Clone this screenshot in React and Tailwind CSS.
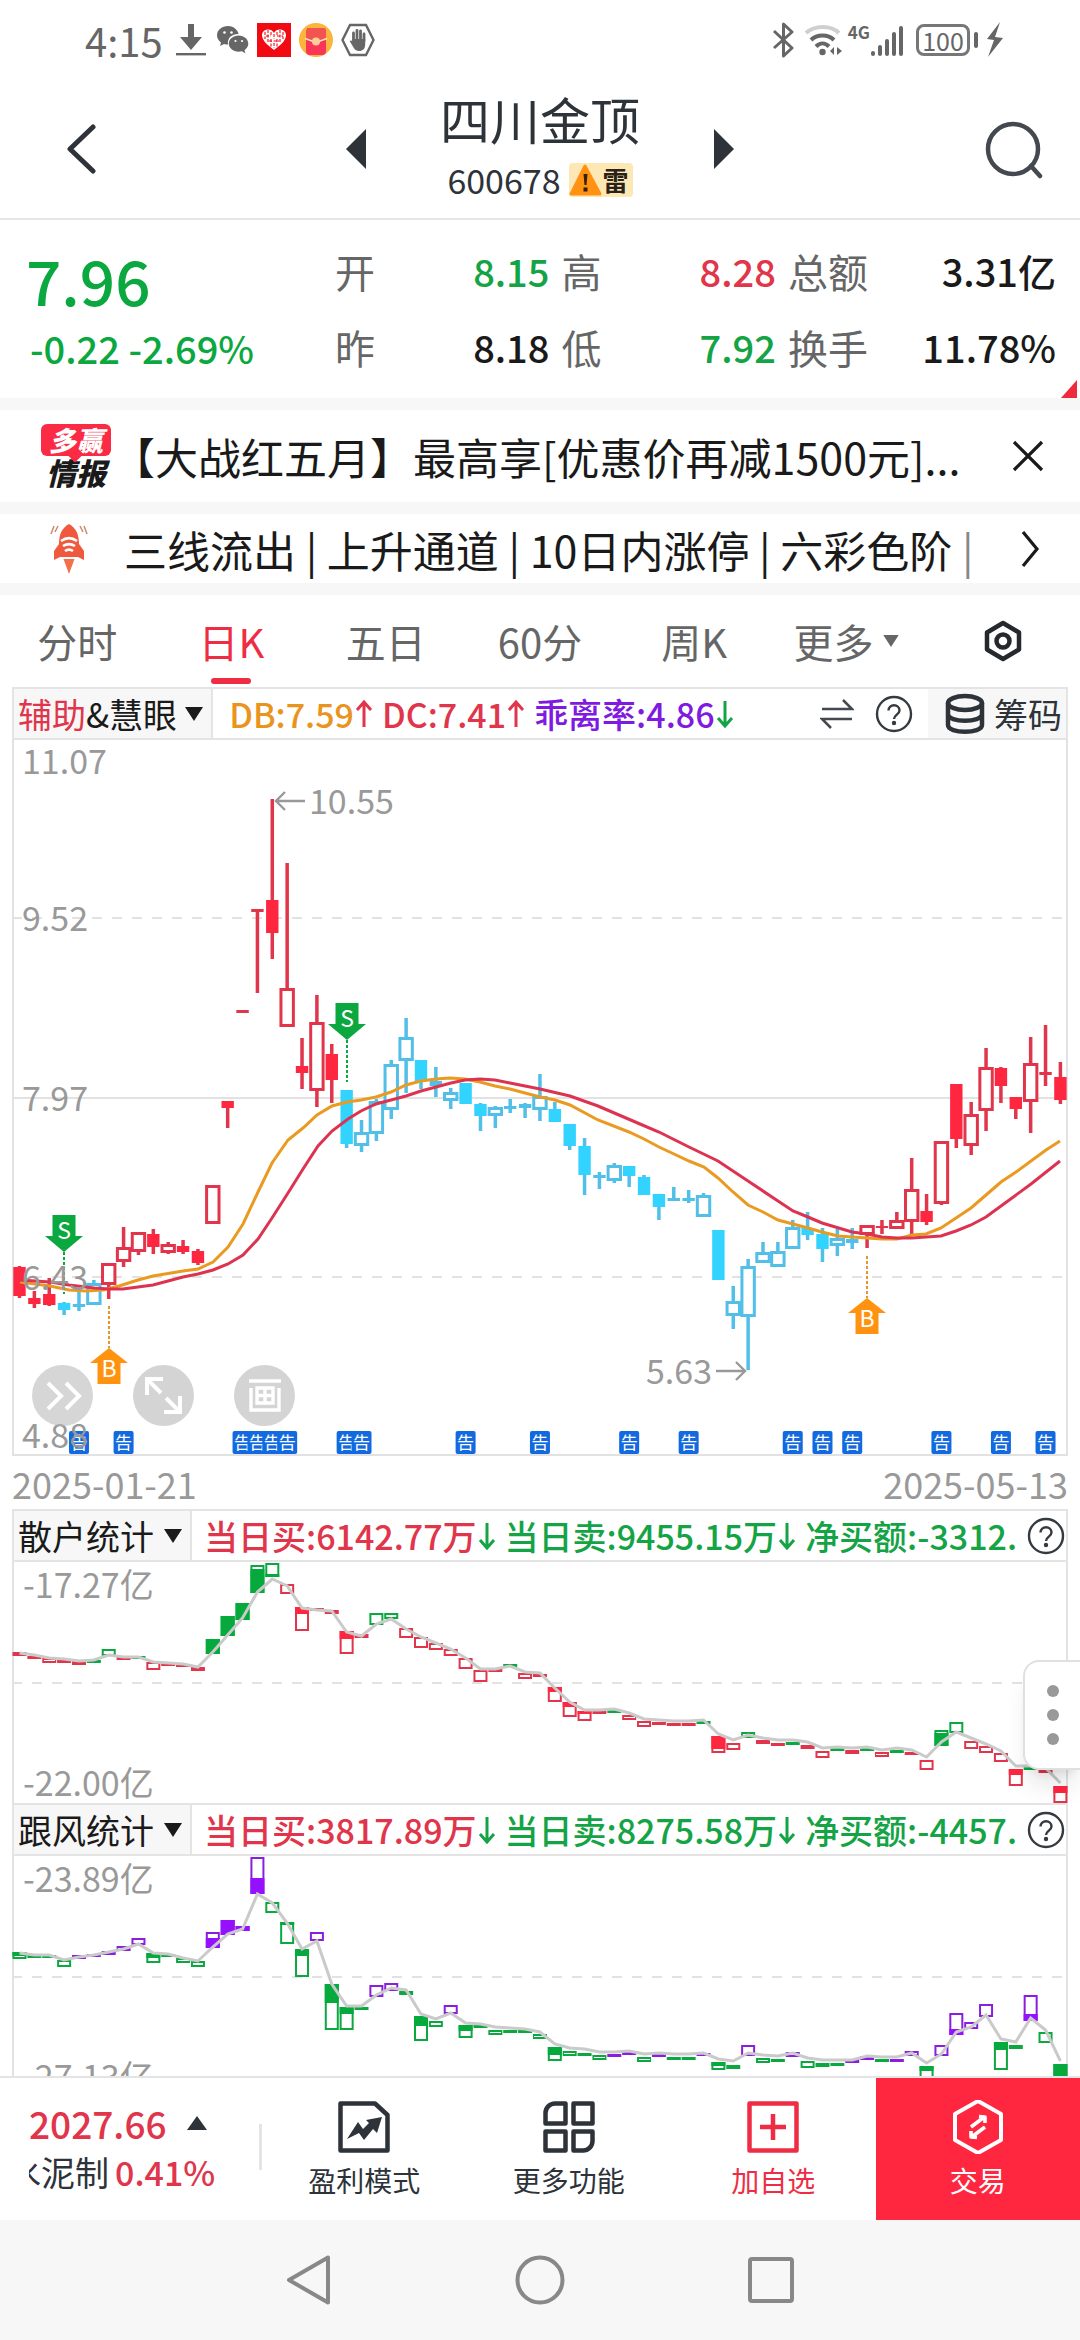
import React from "react";

const RED = "#e0354a";
const RED_FILL = "#ff263f";
const BLUE = "#52bfe8";
const BLUE_FILL = "#33d3ff";
const GREEN = "#0aa83f";
const PURPLE = "#8a1ee0";

const STEP = 14.87;
const barX = (i) => 19.5 + STEP * i;

// [kind, body top, body bottom, high, low] - upper case is a filled body
const CANDLES = [
  ["R", 1268, 1297, 1267, 1299], ["R", 1299, 1305, 1292, 1309], ["R", 1295, 1306, 1279, 1307],
  ["B", 1304, 1311, 1303, 1316], ["B", 1305, 1308, 1290, 1312], ["b", 1284, 1306, 1281, 1306],
  ["r", 1264, 1286, 1264, 1300], ["r", 1248, 1263, 1228, 1268], ["r", 1233, 1253, 1233, 1256],
  ["R", 1235, 1248, 1230, 1255], ["r", 1245, 1254, 1243, 1255], ["R", 1247, 1253, 1241, 1255],
  ["R", 1252, 1264, 1250, 1266], ["r", 1186, 1225, 1186, 1225], ["R", 1102, 1109, 1102, 1129],
  ["R", 1011, 1014, 1011, 1014], ["R", 910, 913, 910, 994], ["R", 901, 934, 800, 960],
  ["r", 989, 1028, 864, 1028], ["R", 1067, 1074, 1039, 1090], ["r", 1023, 1092, 996, 1108],
  ["R", 1055, 1081, 1045, 1104], ["B", 1091, 1145, 1091, 1149], ["b", 1133, 1147, 1121, 1153],
  ["b", 1102, 1135, 1100, 1142], ["b", 1065, 1111, 1061, 1120], ["b", 1038, 1062, 1019, 1094],
  ["B", 1061, 1082, 1061, 1090], ["B", 1082, 1087, 1068, 1098], ["b", 1093, 1102, 1089, 1110],
  ["B", 1084, 1105, 1084, 1105], ["B", 1105, 1117, 1104, 1132], ["b", 1108, 1117, 1107, 1129],
  ["B", 1107, 1110, 1100, 1114], ["B", 1105, 1109, 1104, 1119], ["b", 1097, 1111, 1075, 1122],
  ["B", 1110, 1123, 1103, 1123], ["B", 1125, 1147, 1125, 1151], ["B", 1147, 1176, 1139, 1196],
  ["B", 1176, 1179, 1173, 1190], ["b", 1166, 1182, 1164, 1184], ["B", 1167, 1177, 1167, 1188],
  ["B", 1178, 1196, 1176, 1196], ["B", 1195, 1208, 1195, 1221], ["B", 1199, 1202, 1188, 1202],
  ["B", 1199, 1202, 1191, 1204], ["b", 1196, 1218, 1194, 1218], ["B", 1231, 1281, 1231, 1281],
  ["b", 1302, 1317, 1287, 1330], ["b", 1267, 1318, 1260, 1371], ["b", 1253, 1264, 1243, 1264],
  ["b", 1252, 1268, 1243, 1268], ["b", 1228, 1250, 1221, 1250], ["B", 1229, 1236, 1213, 1241],
  ["B", 1235, 1250, 1229, 1263], ["b", 1239, 1247, 1230, 1257], ["B", 1240, 1244, 1229, 1250],
  ["r", 1226, 1236, 1226, 1249], ["R", 1227, 1229, 1221, 1235], ["r", 1221, 1230, 1213, 1230],
  ["r", 1190, 1223, 1159, 1236], ["R", 1212, 1223, 1195, 1226], ["r", 1142, 1205, 1142, 1206],
  ["R", 1085, 1140, 1085, 1149], ["r", 1115, 1147, 1103, 1156], ["r", 1068, 1112, 1049, 1132],
  ["R", 1069, 1087, 1068, 1104], ["R", 1098, 1110, 1098, 1120], ["r", 1064, 1103, 1038, 1134],
  ["R", 1073, 1076, 1026, 1087], ["R", 1078, 1101, 1063, 1105],
];

const DB_LINE =
  "20,1283 50,1287 69,1291 86,1292 103,1291 119,1287 138,1281 153,1277 183,1272 198,1270 213,1263 228,1248 243,1225 258,1193 272,1164 288,1141 303,1129 317,1116 332,1107 347,1103 361,1101 376,1098 391,1093 406,1086 421,1082 436,1080 450,1079 465,1080 480,1083 495,1087 510,1090 525,1094 540,1098 555,1101 570,1106 598,1121 629,1133 644,1140 659,1148 674,1155 689,1162 704,1168 718,1179 733,1193 748,1206 763,1213 778,1221 793,1225 808,1229 822,1233 838,1237 852,1238 882,1240 897,1240 912,1236 926,1235 941,1229 956,1219 971,1209 986,1196 1001,1183 1016,1173 1031,1162 1046,1151 1060,1142";
const DC_LINE =
  "20,1281 50,1283 69,1286 94,1289 109,1290 123,1290 138,1288 153,1286 168,1282 183,1278 198,1275 213,1271 228,1265 243,1256 258,1240 272,1219 288,1194 303,1170 318,1147 332,1132 348,1120 361,1112 376,1105 391,1101 406,1097 421,1092 436,1088 451,1084 465,1081 480,1080 495,1081 510,1084 540,1090 570,1097 598,1107 640,1125 659,1133 689,1148 718,1162 748,1182 778,1202 793,1212 808,1218 822,1224 852,1233 867,1235 882,1238 897,1239 912,1239 926,1238 941,1237 956,1232 971,1226 986,1218 1001,1207 1031,1185 1060,1162";

const NOTICES = [4, 7, 15, 16, 17, 18, 22, 23, 30, 35, 41, 45, 52, 54, 56, 62, 66, 69];

// [color, top, bottom, filled from the top, filled from the bottom]
const RETAIL_BARS = [
  ["r", 90, 94], ["r", 94, 97], ["r", 96, 101], ["r", 98, 100], ["r", 99, 103], ["g", 98, 100],
  ["g", 87, 94], ["r", 95, 98], ["g", 94, 96], ["r", 100, 108], ["r", 101, 103], ["r", 102, 105],
  ["r", 105, 109], ["g", 77, 92, 15], ["g", 54, 74, 20], ["g", 41, 58, 17], ["g", 3, 31, 0, 24],
  ["g", 1, 15, 0, 3], ["r", 22, 32], ["r", 45, 69, 7], ["r", 46, 48], ["r", 48, 52],
  ["r", 69, 92, 8], ["r", 72, 76], ["g", 51, 63], ["g", 51, 57], ["r", 66, 76], ["r", 75, 86],
  ["r", 81, 88], ["r", 87, 94], ["r", 96, 107], ["r", 108, 120], ["r", 107, 109], ["g", 102, 105],
  ["r", 111, 117], ["r", 112, 114], ["r", 125, 140, 5], ["r", 140, 155, 5], ["r", 149, 159, 3],
  ["r", 149, 152], ["g", 148, 150], ["r", 153, 158], ["r", 159, 165], ["r", 160, 163],
  ["r", 161, 163], ["r", 161, 163], ["g", 159, 161], ["r", 174, 191, 13], ["r", 181, 188],
  ["g", 170, 176], ["r", 178, 182], ["r", 181, 184], ["g", 180, 182], ["r", 183, 187],
  ["r", 189, 196], ["g", 186, 188], ["r", 188, 192], ["g", 186, 188], ["r", 190, 195],
  ["g", 188, 190], ["r", 190, 193], ["r", 198, 208], ["g", 168, 184, 0, 13], ["g", 160, 171],
  ["r", 179, 187], ["r", 184, 191], ["r", 191, 200], ["r", 207, 224, 6], ["g", 205, 208],
  ["r", 208, 211], ["r", 224, 241, 7],
];
const RETAIL_LINE = [
  91, 93, 96, 97, 99, 98, 93, 95, 95, 100, 101, 102, 105, 90, 73, 56, 30, 17, 24, 46, 48, 49, 70, 74,
  62, 57, 67, 75, 81, 87, 96, 107, 107, 104, 110, 111, 126, 140, 148, 148, 147, 151, 157, 158, 159,
  159, 158, 172, 178, 173, 176, 178, 178, 180, 186, 185, 186, 185, 188, 186, 188, 195, 180, 170, 176,
  182, 189, 204, 204, 206, 221,
];

const FOLLOW_BARS = [
  ["g", 96, 103, 4], ["g", 99, 102], ["g", 99, 101], ["g", 104, 111], ["p", 99, 103], ["p", 98, 101],
  ["p", 95, 99], ["p", 90, 95], ["p", 82, 89], ["g", 97, 107, 5], ["g", 98, 100], ["g", 102, 107],
  ["g", 105, 111], ["p", 76, 92, 0, 10], ["p", 64, 79, 15], ["p", 70, 75, 5], ["p", 1, 38, 0, 16],
  ["g", 46, 57], ["g", 66, 88, 3], ["g", 93, 121, 7], ["p", 76, 85], ["g", 128, 174, 19],
  ["g", 151, 174, 7], ["g", 151, 153], ["p", 129, 141], ["p", 127, 135], ["g", 135, 139],
  ["g", 160, 185, 10], ["g", 165, 171], ["p", 149, 158], ["g", 169, 182, 6], ["g", 169, 171],
  ["g", 174, 179], ["g", 174, 176], ["g", 174, 176], ["g", 178, 183], ["g", 191, 205, 8],
  ["g", 195, 200], ["g", 197, 199], ["g", 199, 204], ["p", 198, 200], ["p", 196, 199],
  ["g", 201, 206], ["p", 198, 201], ["g", 201, 204], ["g", 201, 203], ["p", 197, 200],
  ["g", 206, 214, 4], ["g", 209, 213], ["p", 189, 200], ["g", 202, 207], ["g", 203, 205],
  ["p", 196, 201], ["g", 205, 212], ["g", 207, 211], ["g", 207, 209], ["p", 203, 207],
  ["p", 200, 204], ["g", 203, 206], ["p", 203, 205], ["p", 195, 200], ["g", 210, 222, 5],
  ["p", 189, 200], ["p", 157, 179, 0, 6], ["p", 166, 173], ["p", 148, 161], ["g", 186, 214, 8],
  ["g", 189, 193], ["p", 139, 165, 0, 7], ["g", 176, 187], ["g", 208, 225, 14],
];
const FOLLOW_LINE = [
  97, 99, 99, 104, 101, 99, 96, 93, 88, 97, 98, 102, 105, 91, 78, 73, 38, 47, 67, 93, 85, 128, 150,
  150, 139, 132, 134, 158, 163, 157, 167, 168, 171, 172, 173, 176, 188, 192, 193, 196, 196, 195, 198,
  197, 198, 198, 197, 203, 205, 197, 199, 200, 197, 202, 204, 204, 204, 200, 201, 201, 197, 207, 198,
  176, 171, 159, 183, 186, 162, 174, 205,
];

const Arrow = ({ up }) => (
  <svg viewBox="0 0 20 28" className="h-7 w-5 shrink-0" fill="none" stroke="currentColor" strokeWidth="3">
    {up ? <path d="M10 27V3M3 10l7-8 7 8" /> : <path d="M10 1v24M3 18l7 8 7-8" />}
  </svg>
);

const Caret = ({ className }) => (
  <svg viewBox="0 0 18 14" className={className} fill="currentColor" aria-hidden="true">
    <path d="M0 0h18L9 14z" />
  </svg>
);

const HelpButton = () => (
  <button aria-label="帮助" className="h-10 w-10 shrink-0 text-[#333a40]">
    <svg viewBox="0 0 40 40" className="h-10 w-10" fill="none" stroke="currentColor" strokeWidth="2.4">
      <circle cx="20" cy="20" r="17" />
      <path d="M14.5 16.5c0-7 11-7 11 0 0 4-5.500 4.200-5.500 8.500" />
      <circle cx="20" cy="29" r="1" fill="currentColor" />
    </svg>
  </button>
);

const StatusBar = () => (
  <div className="flex h-20 shrink-0 items-center justify-between pr-[76px] pl-[85px] text-[#666]">
    <div className="flex items-center">
      <span className="text-[40px] leading-10">4:15</span>
      <svg viewBox="0 0 32 34" className="ml-3 h-[34px] w-8" fill="currentColor">
        <path d="M13 1h6v13h8L16 27 5 14h8z" />
        <path d="M1 30h30v2.400H1z" />
      </svg>
      <svg viewBox="0 0 32 28" className="ml-2.5 h-7 w-8" fill="currentColor">
        <path d="M11 0C5 0 0 4 0 9.300c0 3 1.600 5.500 4 7.200L3 20l4-2.100c1.300.4 2.600.5 4 .5C10 12 15 7.800 21.600 8 20.500 3.400 16 0 11 0z" />
        <path d="M21.600 9.400c-5.500 0-9.800 3.600-9.800 8.200s4.300 8.200 9.800 8.200c1.200 0 2.300-.2 3.300-.5l3.500 1.900-.9-3c2.300-1.600 3.800-4 3.800-6.600 0-4.600-4.300-8.200-9.700-8.200z" />
        <g fill="#fff">
          <circle cx="7.500" cy="6.500" r="1.300" />
          <circle cx="14.500" cy="6.500" r="1.300" />
          <circle cx="18.500" cy="15" r="1.100" />
          <circle cx="25" cy="15" r="1.100" />
        </g>
      </svg>
      <svg viewBox="0 0 34 34" className="ml-2 h-[34px] w-[34px]">
        <path d="M0 0h34v34H0z" fill="#f20a12" />
        <path d="M17 27C9 21 5 17 5 12c0-6 9-8 12-2 3-6 12-4 12 2 0 5-4 9-12 15z" fill="#fff" />
        <path
          d="M8 9v7M11 7v13M14 9v4m0 3v8M20 9v4m0 3v8M23 7v13M26 9v7M9 13h5M12 18h10M20 13h6M17 11v5M17 20v5"
          stroke="#f20a12"
          strokeWidth="1.100"
          strokeDasharray="3 1.500"
        />
      </svg>
      <svg viewBox="0 0 34 34" className="ml-2 h-[34px] w-[34px]">
        <circle cx="17" cy="17" r="17" fill="#fbb43c" />
        <rect x="7" y="6" width="20" height="26" rx="4" fill="#fb3558" />
        <path d="M8 5h17a2 2 0 0 1 2 2v9l-10 4-10-4V8z" fill="#f2544f" />
        <path d="M6 15.500l11 4 11-4" stroke="#fde2c8" strokeWidth="1.500" fill="none" />
        <circle cx="17" cy="18.500" r="4" fill="#fbcf96" />
      </svg>
      <svg viewBox="0 0 34 34" className="ml-2 h-[34px] w-[34px]" fill="none" stroke="currentColor" strokeWidth="2.400">
        <path d="M9 2h16l7.500 15L25 32H9L1.500 17z" />
        <path d="M12.500 18v-8M16 17V7.500M19.500 17V8M23 18v-7" strokeWidth="2.800" strokeLinecap="round" />
        <path d="M11.200 16h13v5c0 5-2.500 7-6 7-3 0-4.500-1.500-6-4l-3.500-6c1-1.200 2.200-.5 3 1z" fill="currentColor" stroke="none" />
      </svg>
    </div>
    <div className="flex items-center">
      <svg viewBox="0 0 24 36" className="h-9 w-6" fill="none" stroke="currentColor" strokeWidth="3" strokeLinejoin="round">
        <path d="M2 9l18 17-8.500 8V2L20 10 2 26" />
      </svg>
      <svg viewBox="0 0 40 34" className="ml-2 h-[34px] w-10" fill="none" strokeWidth="4">
        <path d="M2 10c9-8 25-8 33 0" stroke="#cfcfcf" />
        <path d="M7 17c6-6 17-6 23 0M12 23.500c4-4 9-4 13 0" stroke="currentColor" />
        <circle cx="18.500" cy="29" r="3.200" fill="currentColor" />
        <path d="M30 24v8l-4-4zM33 24v8l5-4z" fill="currentColor" />
      </svg>
      <span className="ml-1 self-start text-[17px] leading-5 font-bold">4G</span>
      <svg viewBox="0 0 34 34" className="h-[34px] w-[34px]" stroke="currentColor" strokeWidth="4" strokeLinecap="round">
        <path d="M3 30v1M10 24v7M17 18v13M24 11v20M31 5v26" />
      </svg>
      <div className="ml-3 flex h-8 w-[54px] items-center justify-center rounded-lg border-3 border-[#777] text-[25px] leading-6">
        100
      </div>
      <div className="ml-1 h-4 w-1 rounded bg-[#666]" />
      <svg viewBox="0 0 18 36" className="ml-2 h-9 w-[18px]" fill="currentColor">
        <path d="M14 0L1 17l7 1-6 17 15-19-8-1z" />
      </svg>
    </div>
  </div>
);

const Header = () => (
  <header className="flex h-[140px] shrink-0 justify-between border-b-2 border-[#e6e6e6] pr-[36px] pl-[64px] text-[#2d3339]">
    <button aria-label="返回" className="w-8">
      <svg viewBox="0 0 34 50" className="h-[50px] w-[34px]" fill="none" stroke="currentColor" strokeWidth="5" strokeLinecap="round" strokeLinejoin="round">
        <path d="M29 3L6 25l23 22" />
      </svg>
    </button>
    <div className="flex w-[388px] items-center justify-between">
      <button aria-label="上一只">
        <svg viewBox="0 0 20 40" className="h-10 w-5" fill="currentColor">
          <path d="M20 0v40L0 20z" />
        </svg>
      </button>
      <div className="flex flex-col items-center gap-3 self-start pt-2">
        <h1 className="text-[50px] leading-[60px]">四川金顶</h1>
        <div className="flex items-center gap-2">
          <span className="text-[34px] leading-10">600678</span>
          <span className="flex h-[34px] items-center rounded bg-[#fde7b4] pr-1 text-[26px] leading-8 font-bold text-[#2a2118]">
            <svg viewBox="0 0 34 32" className="h-8 w-[34px]">
              <path d="M16 2L2 30h29z" fill="#ff9212" stroke="#ff9212" strokeWidth="3" strokeLinejoin="round" />
              <path d="M14.500 10h4l-1 11h-2zM14.500 23.500h4v4h-4z" fill="#33200a" />
            </svg>
            雷
          </span>
        </div>
      </div>
      <button aria-label="下一只">
        <svg viewBox="0 0 20 40" className="h-10 w-5" fill="currentColor">
          <path d="M0 0v40l20-20z" />
        </svg>
      </button>
    </div>
    <button aria-label="搜索">
      <svg viewBox="0 0 60 60" className="h-[60px] w-[60px]" fill="none" stroke="#44484f" strokeWidth="4.500" strokeLinecap="round">
        <circle cx="29" cy="30" r="25" />
        <path d="M47 47l9 10" />
      </svg>
    </button>
  </header>
);

const QUOTES = [
  ["开", "8.15", "text-[#14a345]"],
  ["高", "8.28", "text-[#e0354a]"],
  ["总额", "3.31亿", "text-[#1a1a1a]"],
  ["昨", "8.18", "text-[#1a1a1a]"],
  ["低", "7.92", "text-[#14a345]"],
  ["换手", "11.78%", "text-[#1a1a1a]"],
];

const QuotePanel = () => (
  <section className="relative flex shrink-0 pt-6 pr-6 pb-[30px] pl-[26px]">
    <div className="w-[309px] text-[#0aa83f]">
      <p className="text-[62px] leading-[70px] font-medium">7.96</p>
      <p className="mt-[14px] pl-1 text-[38px] leading-10 font-medium">-0.22 -2.69%</p>
    </div>
    <dl className="grid flex-1 grid-cols-[4fr_4fr_5fr] gap-x-3 gap-y-[34px] pt-[7px] text-[38px] leading-10">
      {QUOTES.map(([label, value, color]) => (
        <div key={label} className="flex justify-between">
          <dt className="text-[40px] text-[#666]">{label}</dt>
          <dd className={`font-medium ${color}`}>{value}</dd>
        </div>
      ))}
    </dl>
    <svg viewBox="0 0 16 18" className="absolute right-[3px] bottom-0 h-[18px] w-4" fill="#ee2a3c">
      <path d="M16 0v18H0z" />
    </svg>
  </section>
);

const NewsRow = () => (
  <section className="flex h-[92px] shrink-0 items-center pr-9 pl-10 text-[#1a1a1a]">
    <div className="flex w-[72px] shrink-0 flex-col items-center italic">
      <span className="relative rounded-md bg-[#fb2b45] px-2 text-[27px] leading-8 font-black text-white">
        多赢
        <span className="absolute -bottom-1 left-7 h-3 w-3 rotate-45 bg-[#fb2b45]" />
      </span>
      <span className="text-[30px] leading-8 font-black">情报</span>
    </div>
    <p className="flex-1 truncate text-[43px] leading-[60px]">【大战红五月】最高享[优惠价再减1500元]...</p>
    <button aria-label="关闭" className="ml-6">
      <svg viewBox="0 0 32 32" className="h-8 w-8" fill="none" stroke="currentColor" strokeWidth="3.200">
        <path d="M2 2l28 28M30 2L2 30" />
      </svg>
    </button>
  </section>
);

const SignalRow = () => (
  <section className="flex h-[69px] shrink-0 items-center pr-10 pl-12 text-[#1a1a1a]">
    <svg viewBox="0 0 42 52" className="h-[52px] w-[42px] shrink-0">
      <path d="M21 1c7 4 10 10 10 20l5 7v9l-6-3H12l-6 3v-9l5-7C11 11 14 5 21 1z" fill="#ef5a3e" />
      <path d="M15.500 36h11L21 51z" fill="#f2714a" />
      <path d="M13 18c5-3.500 11-3.500 16 0M15 23c4-2.500 8-2.500 12 0M17 28c3-2 5-2 8 0" stroke="#fff" strokeWidth="2.600" fill="none" />
      <path d="M6 3L3 11M10 3L7 9M36 3l3 8M32 3l3 6" stroke="#c98a72" strokeWidth="1.500" />
    </svg>
    <p className="flex-1 overflow-hidden pl-[34px] text-[43px] leading-[60px] whitespace-nowrap">
      三线流出 | 上升通道 | 10日内涨停 | 六彩色阶 <span className="text-[#888]">|</span>
    </p>
    <button aria-label="展开" className="ml-9">
      <svg viewBox="0 0 20 42" className="h-[42px] w-5" fill="none" stroke="currentColor" strokeWidth="3.200">
        <path d="M3 4l14 17L3 38" />
      </svg>
    </button>
  </section>
);

const TABS = ["分时", "日K", "五日", "60分", "周K"];

const Tabs = () => (
  <nav className="grid h-[92px] shrink-0 grid-cols-7 text-[40px] leading-[60px] text-[#666]">
    {TABS.map((tab) =>
      tab === "日K" ? (
        <button key={tab} aria-current="page" className="relative text-[#ee2d44]">
          {tab}
          <span className="absolute bottom-[3px] left-1/2 h-[6px] w-10 -translate-x-1/2 rounded-full bg-[#ee2d44]" />
        </button>
      ) : (
        <button key={tab}>{tab}</button>
      )
    )}
    <button className="flex items-center justify-center gap-2 pr-1">
      更多
      <Caret className="h-3 w-[18px]" />
    </button>
    <button aria-label="设置" className="flex items-center justify-center">
      <svg viewBox="0 0 40 42" className="h-[42px] w-10" fill="none" stroke="#25292e" strokeWidth="4.500" strokeLinejoin="round">
        <path d="M20 3l16 9.500v17L20 39 4 29.500v-17z" />
        <circle cx="20" cy="21" r="6.500" />
      </svg>
    </button>
  </nav>
);

const Marker = ({ x, y, kind }) => {
  const sell = kind === "S";
  return (
    <g>
      <line
        x1={x}
        x2={x}
        y1={sell ? y + 37 : y - 42}
        y2={sell ? y + 79 : y}
        stroke={sell ? GREEN : "#e8962a"}
        strokeWidth="2"
        strokeDasharray="3 2"
      />
      <path
        d={
          sell
            ? `M${x - 11.500} ${y}h23v21h7.500l-19 16-19-16h7.500z`
            : `M${x} ${y}l19 15h-7.500v21h-23v-21h-7.500z`
        }
        fill={sell ? GREEN : "#ff9310"}
      />
      <text x={x} y={sell ? y + 24 : y + 29} textAnchor="middle" fontSize="23" fill="#fff">
        {kind}
      </text>
    </g>
  );
};

const KLineChart = () => (
  <svg viewBox="12 741 1056 716" className="block h-auto w-full">
    <g stroke="#e2e2e2" strokeWidth="2" fill="none">
      <path d="M12 919H1068M12 1278H1068" strokeDasharray="10 10" />
      <path d="M12 1099H1068" />
      <path d="M13 741V1456H1067V741" />
    </g>
    {CANDLES.map(([kind, top, bottom, high, low], i) => {
      const isRed = kind.toLowerCase() === "r";
      const line = isRed ? RED : BLUE;
      const x = barX(i);
      return (
        <g key={i}>
          {high < top && <rect x={x - 1.750} y={high} width="3.500" height={top - high} fill={line} />}
          {low > bottom && <rect x={x - 1.750} y={bottom} width="3.500" height={low - bottom} fill={line} />}
          {kind === "R" || kind === "B" ? (
            <rect x={x - 6.200} y={top} width="12.400" height={bottom - top} fill={bottom - top < 6 ? line : isRed ? RED_FILL : BLUE_FILL} />
          ) : (
            <rect x={x - 6.200} y={top + 1.500} width="12.400" height={bottom - top - 3} fill="#fff" stroke={line} strokeWidth="3" />
          )}
        </g>
      );
    })}
    <polyline points={DB_LINE} fill="none" stroke="#ea9a20" strokeWidth="3" />
    <polyline points={DC_LINE} fill="none" stroke="#dc3350" strokeWidth="3" />
    <Marker x={64} y={1216} kind="S" />
    <Marker x={347} y={1004} kind="S" />
    <Marker x={109} y={1349} kind="B" />
    <Marker x={867} y={1299} kind="B" />
    {NOTICES.map((i) => (
      <g key={i}>
        <rect x={barX(i) - 10} y="1432" width="20" height="23" rx="2" fill="#136ae0" />
        <text x={barX(i)} y="1450" textAnchor="middle" fontSize="17" fill="#fff">
          告
        </text>
      </g>
    ))}
    <g fill="none" stroke="#999" strokeWidth="2.400">
      <path d="M305 802H276M285 793l-9 9 9 9" />
      <path d="M716 1372h29M736 1363l9 9-9 9" />
    </g>
    <g fontSize="34" fill="#999">
      <text x="309" y="815">10.55</text>
      <text x="646" y="1385">5.63</text>
      <text x="22" y="775">11.07</text>
      <text x="22" y="932">9.52</text>
      <text x="22" y="1112">7.97</text>
      <text x="22" y="1291">6.43</text>
      <text x="22" y="1449">4.88</text>
    </g>
  </svg>
);

const MainChart = () => (
  <section className="shrink-0 px-3">
    <div className="flex h-[53px] items-center border-2 border-[#e4e4e4] text-[34px] leading-[48px]">
      <button className="flex h-full shrink-0 items-center border-r-2 border-[#e4e4e4] bg-[#f7f7f7] pr-2 pl-1 text-[#1a1a1a]">
        <span className="text-[#e0354a]">辅助</span>&amp;慧眼
        <Caret className="ml-2 h-[14px] w-[18px]" />
      </button>
      <div className="flex flex-1 items-center gap-2 overflow-hidden pl-4 font-medium whitespace-nowrap">
        <span className="flex items-center text-[#ea9420]">
          DB:7.59
          <span className="text-[#e0354a]"><Arrow up /></span>
        </span>
        <span className="flex items-center text-[#e0354a]">
          DC:7.41
          <Arrow up />
        </span>
        <span className="flex items-center text-[#7f1ae0]">
          乖离率:4.86
          <span className="text-[#14a345]"><Arrow /></span>
        </span>
      </div>
      <button aria-label="切换" className="mr-5">
        <svg viewBox="0 0 34 32" className="h-8 w-[34px]" fill="none" stroke="#44494f" strokeWidth="2.600">
          <path d="M2 11h30L23 2M32 21H2l9 9" />
        </svg>
      </button>
      <HelpButton />
      <button className="ml-3.5 flex h-full shrink-0 items-center gap-2 bg-[#f7f7f7] pr-1 pl-4 text-[#2d3339]">
        <svg viewBox="0 0 42 42" className="h-[42px] w-[42px]" fill="none" stroke="currentColor" strokeWidth="4.500">
          <ellipse cx="21" cy="10" rx="17" ry="7" />
          <path d="M4 10v22c0 9 34 9 34 0V10M4 21c0 9 34 9 34 0" />
        </svg>
        筹码
      </button>
    </div>
    <div className="relative">
      <KLineChart />
      <div className="absolute bottom-[30px] left-5 flex gap-10">
        <button aria-label="快进" className="h-[61px] w-[61px] rounded-full bg-[#bbb]/60">
          <svg viewBox="0 0 61 61" fill="none" stroke="#fff" strokeWidth="4">
            <path d="M16 18l13 13-13 13M34 18l13 13-13 13" />
          </svg>
        </button>
        <button aria-label="全屏" className="h-[61px] w-[61px] rounded-full bg-[#d4d4d4]">
          <svg viewBox="0 0 61 61" fill="none" stroke="#fff" strokeWidth="4">
            <path d="M14 30V14h16M14 14l14 14M47 31v16H31M47 47L33 33" />
          </svg>
        </button>
        <button aria-label="画线" className="h-[61px] w-[61px] rounded-full bg-[#d4d4d4]">
          <svg viewBox="0 0 61 61" fill="none" stroke="#fff" strokeWidth="3.400">
            <path d="M15 16h32M17 23v22h28V23" />
            <path d="M23 23h16v15H23zM31 23v15M23 30.500h16" />
          </svg>
        </button>
      </div>
    </div>
    <div className="flex h-[53px] items-center justify-between text-[36px] leading-[48px] text-[#999]">
      <span>2025-01-21</span>
      <span>2025-05-13</span>
    </div>
  </section>
);

const BAR_COLORS = {
  r: [RED, RED_FILL],
  g: [GREEN, "#06aa3c"],
  p: [PURPLE, "#9410ff"],
};

const FlowChart = ({ bars, line, top, bottom }) => (
  <svg viewBox="12 0 1056 241" className="block h-auto w-full">
    <g stroke="#e2e2e2" strokeWidth="2">
      <path d="M12 121H1068" strokeDasharray="10 10" />
      <path d="M13 0V241M1067 0V241" />
    </g>
    {bars.map(([color, y0, y1, fillTop = 0, fillBottom = 0], i) => {
      const [stroke, fill] = BAR_COLORS[color];
      const x = barX(i);
      return (
        <g key={i}>
          {y1 - y0 < 4 ? (
            <rect x={x - 7} y={y0} width="14" height="3" fill={stroke} />
          ) : (
            <rect x={x - 6} y={y0 + 1} width="12" height={y1 - y0 - 2} fill="#fff" stroke={stroke} strokeWidth="2" />
          )}
          {fillTop > 0 && <rect x={x - 7} y={y0} width="14" height={fillTop} fill={fill} />}
          {fillBottom > 0 && <rect x={x - 7} y={y1 - fillBottom} width="14" height={fillBottom} fill={fill} />}
        </g>
      );
    })}
    <polyline points={line.map((y, i) => `${barX(i)},${y}`).join(" ")} fill="none" stroke="#cacaca" strokeWidth="3" />
    <g fontSize="34" fill="#999">
      <text x="23" y="36">{top}</text>
      <text x="23" y="234">{bottom}</text>
    </g>
  </svg>
);

const FlowPanel = ({ name, buy, sell, net, ...chart }) => (
  <section className="shrink-0 px-3">
    <div className="flex h-[53px] items-center border-2 border-[#e4e4e4] text-[34px] leading-[48px]">
      <button className="flex h-full shrink-0 items-center border-r-2 border-[#e4e4e4] bg-[#f7f7f7] pr-2 pl-1 text-[#1a1a1a]">
        {name}
        <Caret className="ml-2.5 h-[14px] w-[18px]" />
      </button>
      <div className="flex flex-1 items-center gap-2 overflow-hidden pl-3 font-medium whitespace-nowrap text-[#14a345]">
        <span className="flex items-center">
          <span className="text-[#e0354a]">当日买:{buy}</span>
          <Arrow />
        </span>
        <span className="flex items-center">
          当日卖:{sell}
          <Arrow />
        </span>
        <span>净买额:{net}</span>
      </div>
      <HelpButton />
    </div>
    <FlowChart {...chart} />
  </section>
);

const ToolButton = ({ label, className, children }) => (
  <button className={`flex flex-1 flex-col items-center justify-start gap-2 pt-[22px] text-[28px] leading-9 ${className}`}>
    <svg viewBox="0 0 54 54" className="h-[54px] w-[54px]" fill="none" stroke="currentColor" strokeWidth="4.500" strokeLinejoin="round">
      {children}
    </svg>
    {label}
  </button>
);

const BottomBar = () => (
  <footer className="flex h-36 shrink-0 border-t-2 border-[#e4e4e4] bg-white">
    <div className="flex w-[262px] items-center justify-between pb-1 pl-[29px] text-[#e0354a]">
      <div>
        <p className="flex items-center text-[37px] leading-[50px] font-medium">
          2027.66
          <svg viewBox="0 0 20 14" className="ml-5 h-[14px] w-5" fill="#2d3339">
            <path d="M10 0l10 14H0z" />
          </svg>
        </p>
        <p className="flex gap-1.5 text-[34px] leading-[48px]">
          <span className="flex w-20 justify-end overflow-hidden text-[#2d3339]">
            <span className="shrink-0">水泥制</span>
          </span>
          <span className="font-medium">0.41%</span>
        </p>
      </div>
      <div className="h-[46px] w-[3px] bg-[#e4e4e4]" />
    </div>
    <ToolButton label="盈利模式" className="text-[#2d3339]">
      <path d="M3.500 3.500H38L50.500 15v35.500h-47z" />
      <path d="M10 39l11-17 5 7 6-6-3-3 16-3-5 16-4-4-9 11-5-7z" fill="currentColor" stroke="none" />
    </ToolButton>
    <ToolButton label="更多功能" className="text-[#2d3339]">
      <path d="M13 3.500h10.500v20h-20V13c0-5 4-9.500 9.500-9.500zM31.500 3.500h19v20h-19zM3.500 31.500h20v19h-20zM31.500 31.500h19V41c0 5-4 9.500-9.500 9.500h-9.500z" />
    </ToolButton>
    <ToolButton label="加自选" className="text-[#ee2d44]">
      <path d="M3.500 3.500h47v47h-47z" />
      <path d="M27 14v26M14 27h26" />
    </ToolButton>
    <ToolButton label="交易" className="bg-[#ff263f] text-white">
      <path d="M27 1L50 14v26L27 53 4 40V14z" strokeWidth="4" />
      <path d="M20 27l12-9M28 16.500l6 .5v6M34 27l-12 9M26 37.500l-6-.5v-6" strokeWidth="3.600" />
    </ToolButton>
  </footer>
);

const SystemNav = () => (
  <nav className="flex h-[120px] shrink-0 items-center justify-center gap-[182px] bg-[#f7f7f7] text-[#888]">
    <button aria-label="后退">
      <svg viewBox="0 0 48 50" className="h-[50px] w-12" fill="none" stroke="currentColor" strokeWidth="4" strokeLinejoin="round">
        <path d="M43 2.500v45L4 25z" />
      </svg>
    </button>
    <button aria-label="主页">
      <svg viewBox="0 0 50 50" className="h-[50px] w-[50px]" fill="none" stroke="currentColor" strokeWidth="4">
        <circle cx="25" cy="25" r="22.500" />
      </svg>
    </button>
    <button aria-label="最近任务">
      <svg viewBox="0 0 48 48" className="h-12 w-12" fill="none" stroke="currentColor" strokeWidth="4">
        <rect x="3" y="3" width="42" height="42" rx="2" />
      </svg>
    </button>
  </nav>
);

const Divider = () => <div className="h-3 shrink-0 bg-[#f7f7f7]" />;

export default function App() {
  return (
    <div className="flex h-screen flex-col bg-white font-['Noto_Sans_CJK_SC',sans-serif]">
      <StatusBar />
      <Header />
      <main className="relative flex min-h-0 flex-1 flex-col overflow-hidden">
        <QuotePanel />
        <Divider />
        <NewsRow />
        <Divider />
        <SignalRow />
        <Divider />
        <Tabs />
        <MainChart />
        <FlowPanel
          name="散户统计"
          buy="6142.77万"
          sell="9455.15万"
          net="-3312."
          bars={RETAIL_BARS}
          line={RETAIL_LINE}
          top="-17.27亿"
          bottom="-22.00亿"
        />
        <FlowPanel
          name="跟风统计"
          buy="3817.89万"
          sell="8275.58万"
          net="-4457."
          bars={FOLLOW_BARS}
          line={FOLLOW_LINE}
          top="-23.89亿"
          bottom="-27.13亿"
        />
        <button
          aria-label="更多操作"
          className="absolute right-0 bottom-[306px] flex h-[110px] w-[57px] flex-col items-center justify-center gap-3 rounded-l-2xl border-2 border-r-0 border-[#e0e0e0] bg-white shadow-xl"
        >
          <span className="h-3 w-3 rounded-full bg-[#999]" />
          <span className="h-3 w-3 rounded-full bg-[#999]" />
          <span className="h-3 w-3 rounded-full bg-[#999]" />
        </button>
      </main>
      <BottomBar />
      <SystemNav />
    </div>
  );
}
